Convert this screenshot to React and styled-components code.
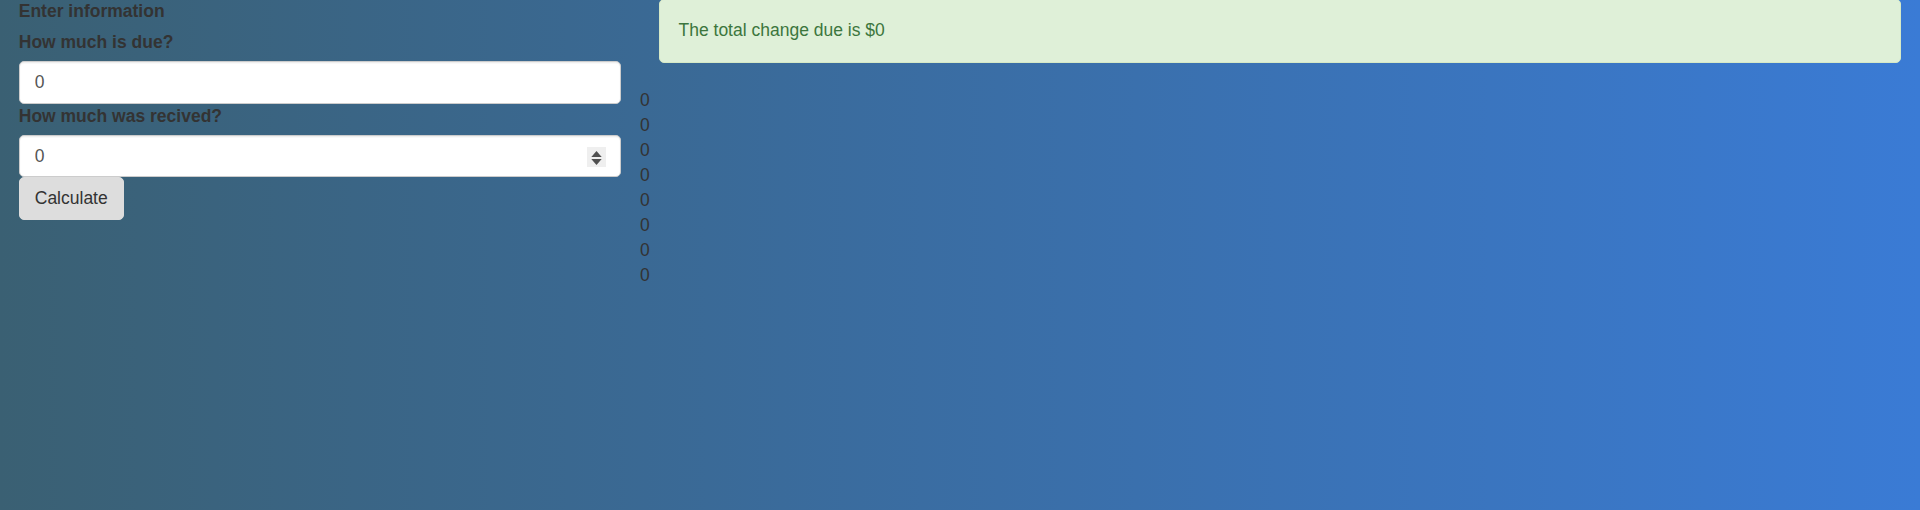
import React, { useState } from "react";
import styled, { createGlobalStyle } from "styled-components";

const GlobalStyle = createGlobalStyle`
  html, body {
    margin: 0;
    padding: 0;
    height: 100%;
  }
  body {
    font-family: "Liberation Sans", Arial, Helvetica, sans-serif;
    font-size: 17.5px;
    line-height: 25px;
    color: #333;
  }
  * { box-sizing: border-box; }
`;

const Page = styled.div`
  display: flow-root;
  min-height: 100vh;
  background: linear-gradient(to right, #3a6073, #3a7bd5);
`;

const Row = styled.div`
  display: grid;
  grid-template-columns: 1fr 2fr;
  margin-top: -1.3px;
`;

const Column = styled.div`
  padding: 0 18.75px;
  min-width: 0;
`;

const Label = styled.label`
  display: block;
  font-weight: bold;
  margin-bottom: 6.25px;
  max-width: 100%;
`;

const InputWrap = styled.div`
  position: relative;
`;

const Input = styled.input`
  display: block;
  width: 100%;
  height: 42.5px;
  padding: 7.5px 15px;
  font-family: inherit;
  font-size: 17.5px;
  line-height: 25px;
  color: #555;
  background: #fff;
  border: 1.25px solid #ccc;
  border-radius: 5px;
  box-shadow: inset 0 1.25px 1.25px rgba(0, 0, 0, 0.075);
  outline: none;
  -moz-appearance: textfield;
  &::-webkit-inner-spin-button,
  &::-webkit-outer-spin-button {
    -webkit-appearance: none;
    margin: 0;
  }
`;

const Spinner = styled.span`
  position: absolute;
  right: 15.5px;
  top: 11.6px;
  width: 19px;
  height: 20px;
  background: #efefef;
  display: flex;
  pointer-events: none;
`;

const Button = styled.button`
  display: inline-block;
  height: 42.5px;
  padding: 7.5px 15px;
  font-family: inherit;
  font-size: 17.5px;
  line-height: 25px;
  color: #333;
  background: #dddddd;
  border: 1.25px solid #dddddd;
  border-radius: 5px;
  cursor: pointer;
`;

const Alert = styled.div`
  padding: 18.75px;
  margin-bottom: 25px;
  border: 1.25px solid #d6e9c6;
  border-radius: 5px;
  background: #dff0d8;
  color: #3c763d;
`;

const ZeroList = styled.div`
  margin: 0 -18.75px;
`;

const Zero = styled.div`
  color: #333;
`;

export default function App() {
  const [due, setDue] = useState(0);
  const [received, setReceived] = useState(0);
  const zeros = [0, 0, 0, 0, 0, 0, 0, 0];
  return (
    <>
      <GlobalStyle />
      <Page>
        <Row>
          <Column>
            <Label>Enter information</Label>
            <Label htmlFor="due">How much is due?</Label>
            <Input
              id="due"
              type="number"
              value={due}
              onChange={(e) => setDue(e.target.value)}
            />
            <Label htmlFor="received">How much was recived?</Label>
            <InputWrap>
              <Input
                id="received"
                type="number"
                value={received}
                onChange={(e) => setReceived(e.target.value)}
              />
              <Spinner>
                <svg width="19" height="20" viewBox="0 0 19 20">
                  <polygon points="9.5,4 4.3,10 14.7,10" fill="#505050" />
                  <polygon points="4.3,12 14.7,12 9.5,18" fill="#505050" />
                </svg>
              </Spinner>
            </InputWrap>
            <Button>Calculate</Button>
          </Column>
          <Column>
            <Alert>The total change due is $0</Alert>
            <ZeroList>
              {zeros.map((z, i) => (
                <Zero key={i}>{z}</Zero>
              ))}
            </ZeroList>
          </Column>
        </Row>
      </Page>
    </>
  );
}
